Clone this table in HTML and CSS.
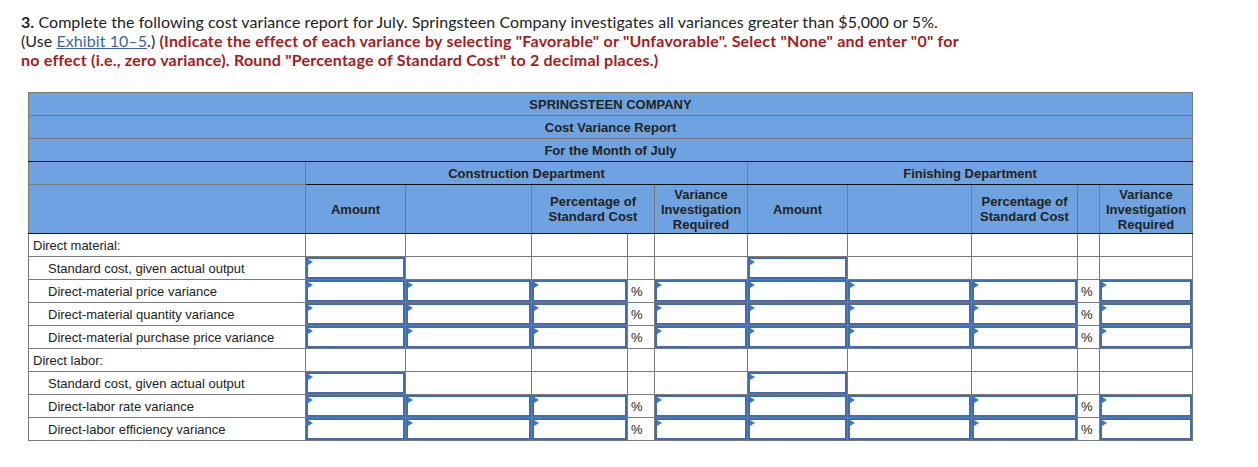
FILE: index.html
```html
<!DOCTYPE html>
<html>
<head>
<meta charset="utf-8">
<link rel="stylesheet" href="styles.css">
</head>
<body>
<div class="question">
  <p class="line"><b>3.</b> Complete the following cost variance report for July. Springsteen Company investigates all variances greater than $5,000 or 5%.</p>
  <p class="line">(Use <a class="exh" href="#">Exhibit 10–5</a>.) <strong class="red">(Indicate the effect of each variance by selecting "Favorable" or "Unfavorable". Select "None" and enter "0" for</strong></p>
  <p class="line"><strong class="red">no effect (i.e., zero variance). Round "Percentage of Standard Cost" to 2 decimal places.)</strong></p>
</div>

<table class="report">
  <colgroup>
    <col class="w-lab"><col class="w-amt"><col class="w-c2"><col class="w-pct"><col class="w-sym">
    <col class="w-var"><col class="w-amt"><col class="w-c2f"><col class="w-pctf"><col class="w-symf"><col class="w-var">
  </colgroup>
  <thead>
    <tr class="r1"><th colspan="11" class="t">SPRINGSTEEN COMPANY</th></tr>
    <tr class="r1"><th colspan="11" class="t">Cost Variance Report</th></tr>
    <tr class="r1"><th colspan="11" class="t last">For the Month of July</th></tr>
    <tr class="r1"><th class="lab first"></th><th colspan="5" class="dept first">Construction Department</th><th colspan="5" class="dept first">Finishing Department</th></tr>
    <tr class="r5">
      <th class="bot"></th>
      <th class="bot">Amount</th>
      <th class="bot"></th>
      <th class="bot" colspan="2">Percentage of<br>Standard Cost</th>
      <th class="bot">Variance<br>Investigation<br>Required</th>
      <th class="bot">Amount</th>
      <th class="bot"></th>
      <th class="bot">Percentage of<br>Standard Cost</th>
      <th class="bot"></th>
      <th class="bot">Variance<br>Investigation<br>Required</th>
    </tr>
  </thead>
  <tbody>
    <tr class="row top">
      <td class="lab">Direct material:</td>
      <td></td><td></td><td></td><td></td><td></td><td></td><td></td><td></td><td></td><td></td>
    </tr>
    <tr class="row">
      <td class="lab ind">Standard cost, given actual output</td>
      <td class="in"><div class="box"></div></td><td></td><td></td><td></td><td></td>
      <td class="in"><div class="box"></div></td><td></td><td></td><td></td><td></td>
    </tr>
    <tr class="row">
      <td class="lab ind">Direct-material price variance</td>
      <td class="in"><div class="box"></div></td><td class="in"><div class="box"></div></td><td class="in"><div class="box"></div></td><td class="sym">%</td><td class="in"><div class="box"></div></td>
      <td class="in"><div class="box"></div></td><td class="in"><div class="box"></div></td><td class="in"><div class="box"></div></td><td class="sym">%</td><td class="in"><div class="box"></div></td>
    </tr>
    <tr class="row">
      <td class="lab ind">Direct-material quantity variance</td>
      <td class="in"><div class="box"></div></td><td class="in"><div class="box"></div></td><td class="in"><div class="box"></div></td><td class="sym">%</td><td class="in"><div class="box"></div></td>
      <td class="in"><div class="box"></div></td><td class="in"><div class="box"></div></td><td class="in"><div class="box"></div></td><td class="sym">%</td><td class="in"><div class="box"></div></td>
    </tr>
    <tr class="row">
      <td class="lab ind">Direct-material purchase price variance</td>
      <td class="in"><div class="box"></div></td><td class="in"><div class="box"></div></td><td class="in"><div class="box"></div></td><td class="sym">%</td><td class="in"><div class="box"></div></td>
      <td class="in"><div class="box"></div></td><td class="in"><div class="box"></div></td><td class="in"><div class="box"></div></td><td class="sym">%</td><td class="in"><div class="box"></div></td>
    </tr>
    <tr class="row">
      <td class="lab">Direct labor:</td>
      <td></td><td></td><td></td><td></td><td></td><td></td><td></td><td></td><td></td><td></td>
    </tr>
    <tr class="row">
      <td class="lab ind">Standard cost, given actual output</td>
      <td class="in"><div class="box"></div></td><td></td><td></td><td></td><td></td>
      <td class="in"><div class="box"></div></td><td></td><td></td><td></td><td></td>
    </tr>
    <tr class="row">
      <td class="lab ind">Direct-labor rate variance</td>
      <td class="in"><div class="box"></div></td><td class="in"><div class="box"></div></td><td class="in"><div class="box"></div></td><td class="sym">%</td><td class="in"><div class="box"></div></td>
      <td class="in"><div class="box"></div></td><td class="in"><div class="box"></div></td><td class="in"><div class="box"></div></td><td class="sym">%</td><td class="in"><div class="box"></div></td>
    </tr>
    <tr class="row">
      <td class="lab ind">Direct-labor efficiency variance</td>
      <td class="in"><div class="box"></div></td><td class="in"><div class="box"></div></td><td class="in"><div class="box"></div></td><td class="sym">%</td><td class="in"><div class="box"></div></td>
      <td class="in"><div class="box"></div></td><td class="in"><div class="box"></div></td><td class="in"><div class="box"></div></td><td class="sym">%</td><td class="in"><div class="box"></div></td>
    </tr>
  </tbody>
</table>
</body>
</html>
```
FILE: styles.css
```css
html, body { margin: 0; padding: 0; background: #fff; }
body { font-family: Lato, "Liberation Sans", sans-serif; color: #222; }

.question { padding: 12px 0 0 21px; font-size: 16px; line-height: 19px; letter-spacing: 0.07px; }
.line { margin: 0; white-space: nowrap; }
.line b { font-weight: 700; }
.exh { color: #3a66a8; text-decoration: underline; }
.red { color: #a51c1c; font-weight: 700; letter-spacing: 0.22px; }

.report {
  margin: 23px 0 0 28px;
  border-collapse: collapse;
  table-layout: fixed;
  width: 1165px;
  font-family: "Liberation Sans", Arial, sans-serif;
  font-size: 13px;
  color: #222;
}
.w-lab { width: 277px; }
.w-amt { width: 100px; }
.w-c2 { width: 126px; }
.w-pct { width: 96px; }
.w-sym { width: 27px; }
.w-var { width: 93px; }
.w-c2f { width: 124px; }
.w-pctf { width: 106px; }
.w-symf { width: 22px; }

.report th, .report td {
  border: 1px solid #7a7a7a;
  padding: 0;
}
.report th {
  background: #6ea2e0;
  font-weight: 700;
  text-align: center;
  line-height: 15px;
}
.r1 { height: 23px; }
.r5 { height: 49px; }
.report th.last { border-bottom-color: #111; }
.report th.first { border-top-color: #111; }
.report th.dept { border-bottom-color: #111; }
.report .r5 th:not(:first-child) { border-top-color: #111; }
.report th.bot { border-bottom-color: #111; }
.report tr.top td { border-top-color: #111; }

.row { height: 23px; }
.report td { background: #fff; }
.report td.lab { padding-left: 4px; white-space: nowrap; }
.report td.ind { padding-left: 19px; }
.report td.sym { padding-left: 3px; }
.report td.in { padding: 0; }

.box {
  position: relative;
  box-sizing: border-box;
  height: 22px;
  width: 100%;
  border: 2px solid #3f6db0;
  background: #fff;
}
.box::before {
  content: "";
  position: absolute;
  left: 0;
  top: 0;
  border-left: 5px solid #3b78cc;
  border-top: 3px solid transparent;
  border-bottom: 3px solid transparent;
}
```
